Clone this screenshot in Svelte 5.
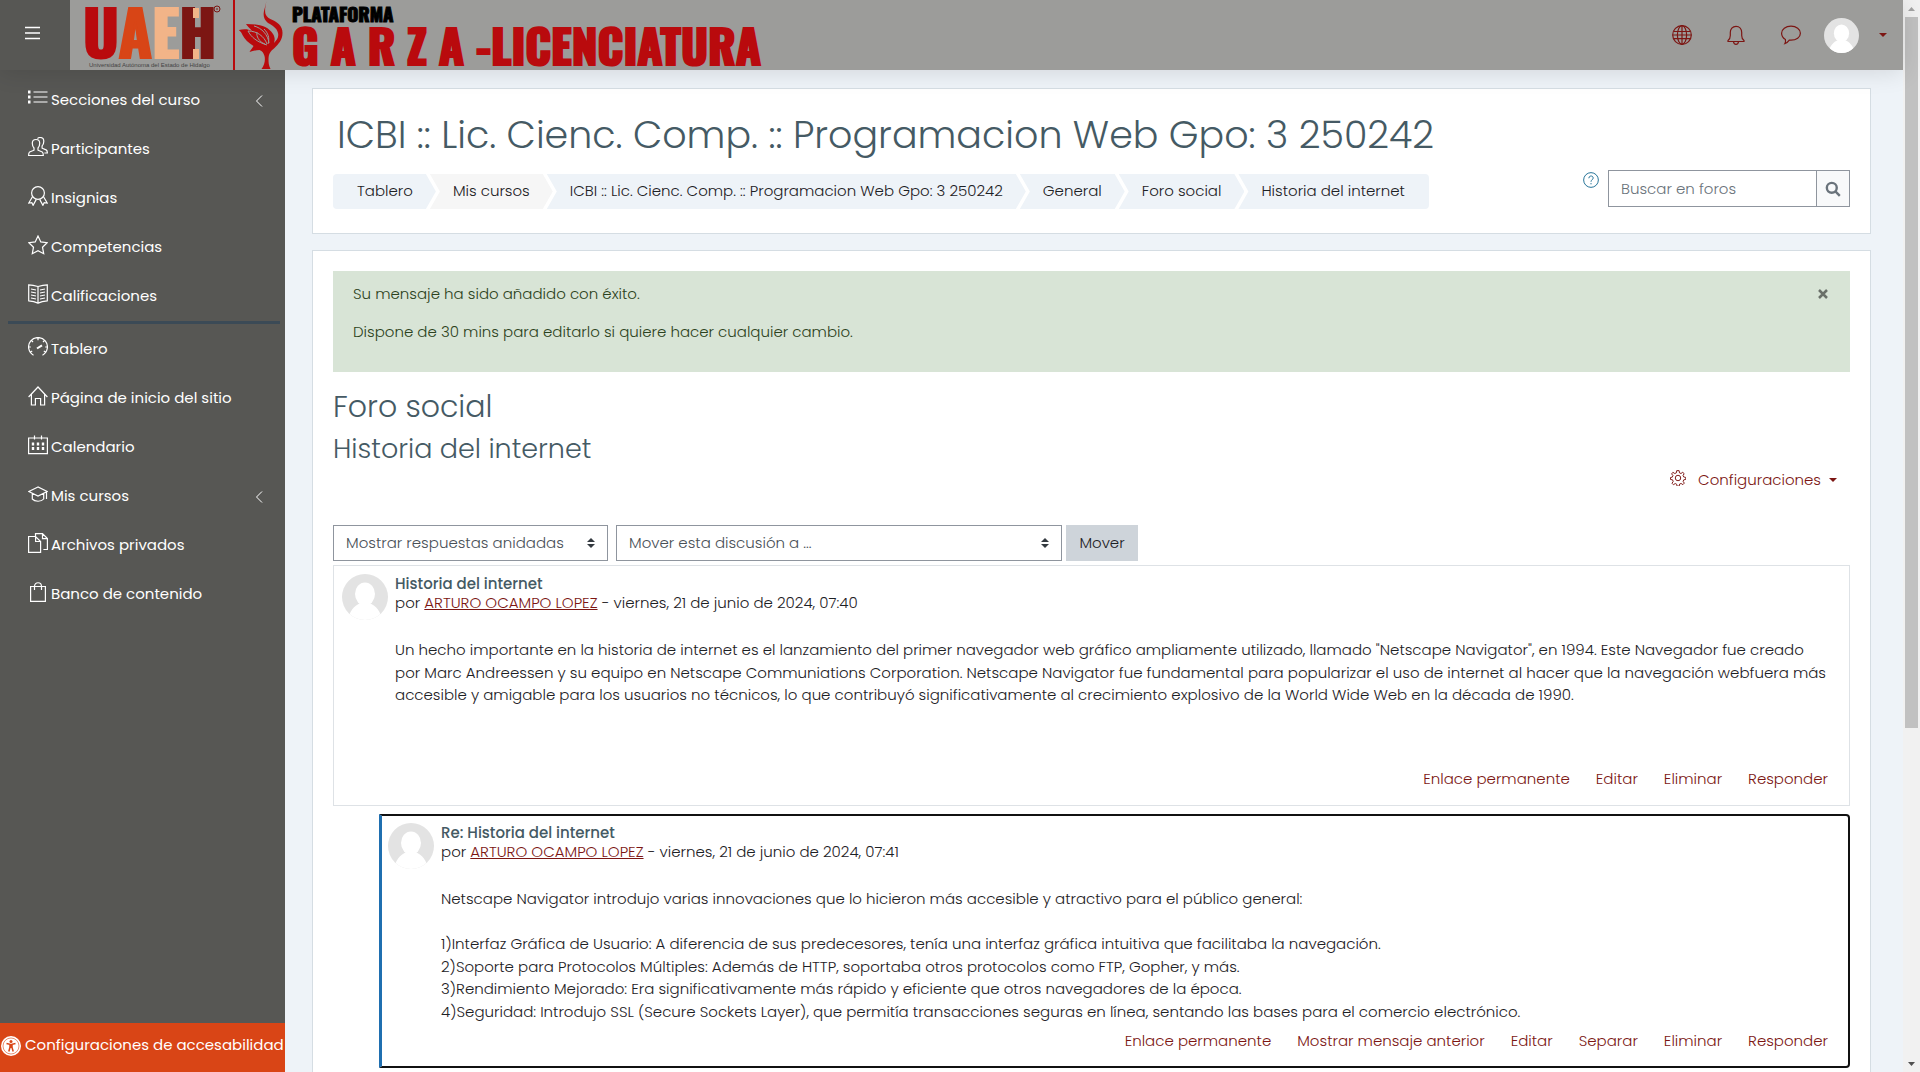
<script>
  const courseNav = [
    { icon: 'list', label: 'Secciones del curso', more: true },
    { icon: 'users', label: 'Participantes' },
    { icon: 'badge', label: 'Insignias' },
    { icon: 'star', label: 'Competencias' },
    { icon: 'book', label: 'Calificaciones' }
  ];
  const siteNav = [
    { icon: 'gauge', label: 'Tablero' },
    { icon: 'home', label: 'Página de inicio del sitio' },
    { icon: 'calendar', label: 'Calendario' },
    { icon: 'cap', label: 'Mis cursos', more: true },
    { icon: 'files', label: 'Archivos privados' },
    { icon: 'bag', label: 'Banco de contenido' }
  ];
  const crumbs = [
    'Tablero',
    'Mis cursos',
    'ICBI :: Lic. Cienc. Comp. :: Programacion Web Gpo: 3 250242',
    'General',
    'Foro social',
    'Historia del internet'
  ];
  const posts = [
    {
      title: 'Historia del internet',
      date: 'viernes, 21 de junio de 2024, 07:40',
      lines: [
        'Un hecho importante en la historia de internet es el lanzamiento del primer navegador web gráfico ampliamente utilizado, llamado "Netscape Navigator", en 1994. Este Navegador fue creado',
        'por Marc Andreessen y su equipo en Netscape Communiations Corporation. Netscape Navigator fue fundamental para popularizar el uso de internet al hacer que la navegación webfuera más',
        'accesible y amigable para los usuarios no técnicos, lo que contribuyó significativamente al crecimiento explosivo de la World Wide Web en la década de 1990.'
      ],
      actions: ['Enlace permanente', 'Editar', 'Eliminar', 'Responder']
    },
    {
      title: 'Re: Historia del internet',
      date: 'viernes, 21 de junio de 2024, 07:41',
      reply: true,
      lines: [
        'Netscape Navigator introdujo varias innovaciones que lo hicieron más accesible y atractivo para el público general:',
        '',
        '1)Interfaz Gráfica de Usuario: A diferencia de sus predecesores, tenía una interfaz gráfica intuitiva que facilitaba la navegación.',
        '2)Soporte para Protocolos Múltiples: Además de HTTP, soportaba otros protocolos como FTP, Gopher, y más.',
        '3)Rendimiento Mejorado: Era significativamente más rápido y eficiente que otros navegadores de la época.',
        '4)Seguridad: Introdujo SSL (Secure Sockets Layer), que permitía transacciones seguras en línea, sentando las bases para el comercio electrónico.'
      ],
      actions: ['Enlace permanente', 'Mostrar mensaje anterior', 'Editar', 'Separar', 'Eliminar', 'Responder']
    }
  ];
  let showAlert = $state(true);
</script>

{#snippet icon(name)}
  <svg class="icon" viewBox="0 0 20 20" aria-hidden="true">
    {#if name === 'list'}
      <path d="M5.5 4h14M5.5 9h14M5.5 14h14" /><path class="dots" d="M0 4h2.500M0 9h2.500M0 14h2.500" />
    {:else if name === 'users'}
      <path d="M8 2.500c2.300 0 3.700 1.600 3.700 3.800 0 2-.6 3.700-1.700 4.700v2.200l4.300 1.800c.7.400 1 1.200 1 3.500H.6c0-2.300.3-3.100 1-3.500L6 13.200V11C4.900 10 4.300 8.300 4.300 6.300 4.300 4.100 5.700 2.500 8 2.500z" />
      <path d="M9.500 1.600C10 .9 11 .5 12 .5c2.500 0 3.800 1.600 3.800 3.800 0 2-.5 3.400-1.700 4.600v2.300l4 1.700c1 .5 1.300 1.300 1.300 3.100h-3" />
    {:else if name === 'badge'}
      <circle cx="10" cy="7" r="6.400" /><path d="M4.600 10.500.8 17l3-.4 1.300 2.700 3.200-5.900M15.400 10.500l3.800 6.500-3-.4-1.300 2.700-3.200-5.900" />
    {:else if name === 'star'}
      <path d="m10 1 2.800 5.900 6.400.8-4.700 4.500 1.200 6.500L10 15.600l-5.700 3.100 1.200-6.500L.8 7.700l6.400-.8z" />
    {:else if name === 'book'}
      <path d="M10 2.500C7.500 1.800 4 1 .7.800v16c3.300.3 6.300.9 9.300 2.300 3-1.400 6-2 9.300-2.300V.8C16 1 12.500 1.800 10 2.500zM10 2.500V19M3 5l5 1M3 8l5 1M3 11l5 1M3 14l5 1M17 5l-5 1M17 8l-5 1M17 11l-5 1M17 14l-5 1" />
    {:else if name === 'gauge'}
      <path d="M5.500 18.200A9.400 9.400 0 1 1 14.500 18.200M10 .8v2.500M3.500 3.500 5 5M16.500 3.500 15 5M.8 10h2M17.200 10h2M2.500 15l1.700-1M17.500 15l-1.700-1" /><path class="thick" d="m9 11.500 5-3.200" />
    {:else if name === 'home'}
      <path d="M.6 11 10 1l9.400 10M3.400 8.500V19h4v-6.500h5.200V19h4V8.500" />
    {:else if name === 'calendar'}
      <path d="M.6 3h18.800v15.600H.6zM6.500.4v4M13.500.4v4" /><path class="dots" d="M3.800 9h2.400M8.800 9h2.400M13.800 9h2.400M3.800 13.500h2.400M8.800 13.500h2.400M13.800 13.500h2.400" />
    {:else if name === 'cap'}
      <path d="M10 3 .8 7.500 10 12l9.200-4.500zM4.300 9.500V15c2.500 3 9 3 11.400 0V9.500M18.500 8v7" />
    {:else if name === 'files'}
      <path d="M.6 3.500h7l5 5v10.900H.6zM7.600 3.500v5h5M7.500 3V.6h7L19.400 5.500v11h-4M14.500.6v5h4.900" />
    {:else if name === 'bag'}
      <path d="M2.600 4.500h14.800v14.800H2.600zM6.500 8V4.500c0-5 7-5 7 0V8" />
    {:else if name === 'globe'}
      <circle cx="10" cy="10" r="9.300" /><ellipse cx="10" cy="10" rx="4.600" ry="9.300" /><path d="M10 .7v18.600M.7 10h18.600M2 6.500h16M2 13.700h16" />
    {:else if name === 'bell'}
      <path d="M2 16.500v-1c1.500-1 2.300-2 2.300-5V7.500C4.300 4 6.500 1.300 10 1.300S15.700 4 15.700 7.500v3c0 3 .8 4 2.300 5v1zM7.500 16.500c.3 3.800 4.700 3.800 5 0" />
    {:else if name === 'chat'}
      <path d="M10 1.200c5.300 0 9.400 3 9.400 7s-4.100 7-9.400 7H8.300C7 17 5.500 18.300 3.800 18.700c.7-1.200.9-2.800.6-4.300C2 13 .6 10.800.6 8.200c0-4 4.100-7 9.400-7z" />
    {:else if name === 'gear'}
      <circle cx="10" cy="10" r="3.400" /><path d="m8.400.8-.4 2.700-2 .9-2.400-1.500-1.600 2 1.700 2-.8 2-2.300.5v2.400l2.600.5.8 2-1.500 2.300 1.800 1.800 2.200-1.500 1.800.8.5 2.500h2.700l.5-2.600 1.900-.8 2.200 1.500 1.800-1.900-1.500-2.200.8-1.900 2.500-.5V9.300l-2.600-.6-.8-1.900L17.700 4.600l-1.800-1.700-2.200 1.500-1.800-.8-.5-2.800z" />
    {:else if name === 'help'}
      <circle cx="10" cy="10" r="9.200" /><path d="M7.300 7.800c0-3.700 5.600-3.700 5.400-.2 0 2-2.700 2.200-2.700 4.600M10 13.800v1.600" />
    {:else if name === 'search'}
      <circle class="heavy" cx="8.500" cy="8.500" r="6.200" /><path class="heavy" d="m13 13 5.500 5.500" />
    {/if}
  </svg>
{/snippet}

{#snippet avatar()}
  <svg class="avatar" viewBox="0 0 46 46" aria-hidden="true">
    <defs><clipPath id="disc"><circle cx="23" cy="23" r="23" /></clipPath></defs>
    <g clip-path="url(#disc)">
      <rect width="46" height="46" fill="#e3e3e3" />
      <ellipse cx="23" cy="20" rx="10" ry="11.500" fill="#fff" />
      <path d="M6 46c1-8 6-15 13-17h8c7 2 12 9 13 17z" fill="#fff" />
    </g>
  </svg>
{/snippet}

{#snippet navList(items)}
  <ul class="nav">
    {#each items as item}
      <li>
        <a href="#{item.icon}">
          {@render icon(item.icon)}<span>{item.label}</span>
          {#if item.more}
            <svg class="more" viewBox="0 0 8 12" aria-hidden="true"><path d="M7 .5 1.500 6 7 11.500" /></svg>
          {/if}
        </a>
      </li>
    {/each}
  </ul>
{/snippet}

<div class="page">
  <header>
    <button class="menu" aria-label="Panel lateral">
      <svg viewBox="0 0 16 14" aria-hidden="true"><path d="M0 1.500h15M0 7h15M0 12.500h15" /></svg>
    </button>
    <a class="brand" href="#inicio" aria-label="Plataforma Garza - Licenciatura">
      <svg class="uaeh" viewBox="0 0 165 70" aria-hidden="true">
        <text class="letters" x="13" y="58"><tspan fill="#b90a0d" stroke="#b90a0d">U</tspan><tspan fill="#d84516" stroke="#d84516">A</tspan><tspan fill="#f2b488" stroke="#f2b488">E</tspan><tspan fill="#7c1613" stroke="#7c1613">H</tspan></text>
        <path d="M123 8h6v10h-6zM123 49h6v10h-6z" fill="#f2b488" />
        <circle cx="147" cy="9" r="3" fill="none" stroke="#7c1613" /><path d="M147 8v2" stroke="#7c1613" />
        <text class="motto" x="19" y="67">Universidad Autónoma del Estado de Hidalgo</text>
        <path d="M164 0v70" stroke="#b90a0d" stroke-width="2" />
      </svg>
      <svg class="heron" viewBox="0 0 48 70" aria-hidden="true">
        <path d="M27.500 1c-1 5-2 9-1 13 1 3 4 5 7 6 4 2 10 5 10 13 0 7-4 11-8 15-4 3-6 6-6 11 0 3 0 6 2 10h-9c3-4 4-9 3-13-1-3-2-5-5-6-3 0-7 1-10 2 1-2 3-4 4-6-5-3-9-7-11-11-1-2-2-4-4-5H0c5-1 9-1 13 1-2-3-5-5-6-7 12 0 22 2 27 10 2 3 2 6 1 9 3-3 5-6 4-10-1-5-6-8-10-10-4-3-5-7-4-12z" />
        <path class="cut" d="M9 31c9 0 16 5 19 13M15 26c8 2 14 9 15 17M9 31c3 6 9 11 19 14" />
        <path class="cut" d="M18 32c-1 4 2 10 8 12M25 29c4 4 6 9 4 15" />
      </svg>
      <span class="wordmark">
        <span class="small">PLATAFORMA</span>
        <span class="large"><span>G A R Z A</span><span>-LICENCIATURA</span></span>
      </span>
    </a>
    <div class="tools">
      <button aria-label="Idioma">{@render icon('globe')}</button>
      <button aria-label="Notificaciones">{@render icon('bell')}</button>
      <button class="chat" aria-label="Mensajes">{@render icon('chat')}</button>
      <button class="user" aria-label="Menú de usuario">{@render avatar()}<i class="caret"></i></button>
    </div>
  </header>

  <aside>
    <nav aria-label="Navegación">
      {@render navList(courseNav)}
      <hr />
      {@render navList(siteNav)}
    </nav>
    <a class="access" href="#accesibilidad">
      <svg viewBox="0 0 20 20" aria-hidden="true">
        <circle cx="10" cy="10" r="10" fill="#fff" /><circle cx="10" cy="10" r="8" fill="none" stroke="#d94516" stroke-width=".6" />
        <circle cx="10" cy="5.500" r="1.500" fill="#d94516" />
        <path d="M5.500 7.500 9 8.300v3L7.800 15.500M14.500 7.500 11 8.300v3l1.200 4.200M10 8v4" fill="none" stroke="#d94516" stroke-width="1.500" />
      </svg>
      <span>Configuraciones de accesabilidad</span>
    </a>
  </aside>

  <main>
    <section class="card head">
      <h1>ICBI :: Lic. Cienc. Comp. :: Programacion Web Gpo: 3 250242</h1>
      <div class="bar">
        <nav aria-label="Ruta">
          <ol>
            {#each crumbs as crumb}<li><a href="#ruta">{crumb}</a></li>{/each}
          </ol>
        </nav>
        <form class="search" onsubmit={(e) => e.preventDefault()}>
          <button type="button" class="help" aria-label="Ayuda">{@render icon('help')}</button>
          <input type="text" placeholder="Buscar en foros" aria-label="Buscar en foros" />
          <button class="go" aria-label="Buscar">{@render icon('search')}</button>
        </form>
      </div>
    </section>

    <section class="card body">
      {#if showAlert}
        <div class="alert" role="status">
          <div>
            <p>Su mensaje ha sido añadido con éxito.</p>
            <p>Dispone de 30 mins para editarlo si quiere hacer cualquier cambio.</p>
          </div>
          <button aria-label="Cerrar" onclick={() => (showAlert = false)}>
            <svg viewBox="0 0 10 10" aria-hidden="true"><path d="m1 1 8 8M9 1 1 9" /></svg>
          </button>
        </div>
      {/if}
      <h2>Foro social</h2>
      <h3>Historia del internet</h3>
      <div class="settings">
        <button>{@render icon('gear')}<span>Configuraciones</span><i class="caret"></i></button>
      </div>
      <form class="controls" onsubmit={(e) => e.preventDefault()}>
        <span class="select mode">
          <select aria-label="Modo de visualización"><option>Mostrar respuestas anidadas</option></select>
          <svg viewBox="0 0 8 10" aria-hidden="true"><path d="M4 0 8 4H0zM4 10 0 6h8z" /></svg>
        </span>
        <span class="select target">
          <select aria-label="Mover esta discusión a"><option>Mover esta discusión a ...</option></select>
          <svg viewBox="0 0 8 10" aria-hidden="true"><path d="M4 0 8 4H0zM4 10 0 6h8z" /></svg>
        </span>
        <button>Mover</button>
      </form>

      {#each posts as post}
        <article class:reply={post.reply}>
          {@render avatar()}
          <div class="content">
            <h4>{post.title}</h4>
            <div class="by">por <a href="#autor">ARTURO OCAMPO LOPEZ</a> - {post.date}</div>
            <div class="text">
              {#each post.lines as line}{line}<br />{/each}
            </div>
            <div class="actions">
              {#each post.actions as action}<a href="#accion">{action}</a>{/each}
            </div>
          </div>
        </article>
      {/each}
    </section>
  </main>

  <div class="scroll" aria-hidden="true">
    <svg viewBox="0 0 17 17"><path d="m8.500 7 3.500 4H5z" fill="#a3a3a3" /></svg>
    <div class="track"><div class="thumb"></div></div>
    <svg viewBox="0 0 17 17"><path d="m8.500 11 3.500-4H5z" fill="#505050" /></svg>
  </div>
</div>

<style>
  :global(body) {
    margin: 0;
    background: #eef3f8;
  }
  .page {
    display: grid;
    grid-template: 70px minmax(0, 1fr) / 285px minmax(0, 1fr) 17px;
    height: 100vh;
    overflow: hidden;
    font: 300 15px/1.5 Poppins, Inter, sans-serif;
    color: #1d2125;
  }
  .page :global(*) {
    box-sizing: border-box;
  }
  button,
  input,
  select {
    font: inherit;
    color: inherit;
    border: 0;
    margin: 0;
    padding: 0;
    background: none;
    border-radius: 0;
  }
  a {
    color: inherit;
    text-decoration: none;
  }
  svg {
    display: block;
    flex: none;
  }
  .icon {
    width: 20px;
    height: 20px;
    fill: none;
    stroke: currentColor;
    stroke-width: 1.2;
  }
  .dots {
    stroke-width: 3;
  }
  .thick {
    stroke-width: 2;
  }
  .heavy {
    stroke-width: 3;
  }
  .caret {
    border: 4px solid transparent;
    border-top-color: currentColor;
    border-bottom: 0;
  }

  header {
    grid-column: 1 / 3;
    display: flex;
    background: #9c9c9a;
    box-shadow: 0 2px 24px rgba(0, 0, 0, 0.12);
    z-index: 1;
  }
  .menu {
    width: 70px;
    padding: 0 0 4px 25px;
    background: #575754;
    flex: none;
  }
  .menu svg {
    width: 16px;
    height: 14px;
    stroke: #fff;
    stroke-width: 1.5;
  }
  .brand {
    display: flex;
  }
  .uaeh {
    width: 165px;
    height: 70px;
  }
  .letters {
    font: 700 61px Oswald, 'Liberation Sans', sans-serif;
    stroke-width: 2;
  }
  .motto {
    font: 400 6px 'Liberation Sans', sans-serif;
    fill: #444;
  }
  .heron {
    width: 48px;
    height: 70px;
    margin-left: 4px;
    fill: #b90a0d;
  }
  .cut {
    fill: none;
    stroke: #9c9c9a;
  }
  .wordmark {
    display: flex;
    flex-direction: column;
    padding: 2px 0 0 5px;
    font-family: Oswald, 'Liberation Sans', sans-serif;
    font-weight: 700;
    white-space: nowrap;
  }
  .small {
    font-size: 19px;
    line-height: 22px;
    color: #000;
    -webkit-text-stroke: 1px #000;
  }
  .large {
    display: flex;
    gap: 12px;
    font-size: 46px;
    line-height: 40px;
    color: #b90a0d;
    -webkit-text-stroke: 2px #b90a0d;
  }
  .tools {
    display: flex;
    align-items: center;
    gap: 34px;
    margin-left: auto;
    padding-right: 16px;
    color: #7c1613;
  }
  .tools .chat .icon,
  .tools .chat :global(.icon) {
    width: 22px;
  }
  .tools .user {
    display: flex;
    align-items: center;
    gap: 20px;
    margin-left: -12px;
  }
  .avatar {
    width: 46px;
    height: 46px;
  }
  .tools .avatar {
    width: 35px;
    height: 35px;
  }

  aside {
    display: flex;
    flex-direction: column;
    justify-content: space-between;
    background: #575754;
    color: #fff;
    font-weight: 400;
  }
  aside nav {
    padding-top: 6px;
  }
  ul,
  ol {
    list-style: none;
    margin: 0;
    padding: 0;
  }
  .nav a {
    display: flex;
    align-items: center;
    gap: 3px;
    height: 49px;
    padding: 0 22px 0 28px;
  }
  .nav .icon {
    margin-bottom: 5px;
  }
  .more {
    width: 8px;
    height: 12px;
    margin-left: auto;
    fill: none;
    stroke: #fff;
  }
  hr {
    height: 3px;
    margin: 0 5px 1px 8px;
    border: 0;
    background: #3b4a56;
  }
  .access {
    display: flex;
    align-items: center;
    gap: 4px;
    height: 49px;
    padding: 0 1px 4px;
    background: #d94516;
    white-space: nowrap;
    overflow: hidden;
  }
  .access svg {
    width: 20px;
    height: 20px;
  }

  main {
    display: flex;
    flex-direction: column;
    gap: 16px;
    padding: 18px 32px 0 27px;
    background: #eef3f8;
    min-height: 0;
  }
  .card {
    padding: 20px;
    border: 1px solid #d5dde3;
    background: #fff;
  }
  .head {
    padding-bottom: 24px;
  }
  .body {
    flex: 1 0 auto;
  }
  h1,
  h2,
  h3,
  h4,
  p {
    margin: 0;
    font-weight: 300;
  }
  h1,
  h2,
  h3,
  h4 {
    color: #455a64;
  }
  h1 {
    padding-left: 4px;
    font-size: 38px;
    line-height: 52px;
  }
  .bar {
    display: flex;
    justify-content: space-between;
    align-items: flex-start;
    padding-top: 9px;
  }
  ol {
    display: flex;
    margin-top: 4px;
    border-radius: 4px;
    overflow: hidden;
    white-space: nowrap;
  }
  ol li {
    height: 35px;
    padding: 0 23px;
    line-height: 33px;
    background: #eef3f8;
    clip-path: polygon(0 0, calc(100% - 10px) 0, 100% 50%, calc(100% - 10px) 100%, 0 100%, 10px 50%);
  }
  ol li + li {
    margin-left: -6px;
  }
  ol li:nth-child(2) {
    background: #f6f6f6;
  }
  ol li:first-child {
    padding-left: 24px;
    clip-path: polygon(0 0, calc(100% - 10px) 0, 100% 50%, calc(100% - 10px) 100%, 0 100%);
  }
  ol li:last-child {
    padding-right: 24px;
    clip-path: polygon(0 0, 100% 0, 100% 100%, 0 100%, 10px 50%);
  }
  .search {
    display: flex;
  }
  .help {
    align-self: flex-start;
    margin: 2px 9px 0 0;
    color: #1f6f94;
  }
  .help .icon,
  .go .icon,
  .settings .icon {
    width: 16px;
    height: 16px;
  }
  .search input {
    width: 208px;
    height: 37px;
    padding: 0 12px;
    border: 1px solid #8f959e;
    border-right: 0;
  }
  .search input::placeholder {
    color: #6a737b;
    opacity: 1;
  }
  .go {
    width: 34px;
    display: grid;
    place-items: center;
    border: 1px solid #8f959e;
    background: #f8f9fa;
    color: #6a737b;
  }

  .alert {
    display: flex;
    justify-content: space-between;
    align-items: flex-start;
    min-height: 101px;
    padding: 12px 20px;
    background: #d8e4d6;
    color: #2c4220;
  }
  .alert p {
    margin-bottom: 15px;
  }
  .alert button {
    padding: 6px 2px;
  }
  .alert svg {
    width: 10px;
    height: 10px;
    stroke: #6a7069;
    stroke-width: 2.5;
  }
  h2 {
    margin-top: 16px;
    font-size: 30px;
    line-height: 38px;
  }
  h3 {
    margin-top: 4px;
    font-size: 27px;
    line-height: 38px;
  }
  .settings {
    display: flex;
    justify-content: flex-end;
    padding-right: 13px;
  }
  .settings button {
    display: flex;
    align-items: center;
    height: 24px;
    color: #7c1613;
  }
  .settings .icon {
    margin-bottom: 4px;
  }
  .settings span {
    margin: 0 8px 0 12px;
  }
  .controls {
    display: flex;
    height: 36px;
    margin-top: 33px;
    color: #495057;
  }
  .select {
    display: flex;
    align-items: center;
    border: 1px solid #8f959e;
    padding-right: 12px;
    margin-right: 8px;
  }
  .select select {
    flex: 1;
    min-width: 0;
    height: 34px;
    padding-left: 12px;
    appearance: none;
  }
  .select svg {
    width: 8px;
    height: 10px;
    fill: #343a40;
  }
  .mode {
    width: 275px;
  }
  .target {
    width: 446px;
    margin-right: 4px;
  }
  .controls button {
    width: 72px;
    background: #ced4da;
    color: #1d2125;
  }

  article {
    display: flex;
    gap: 7px;
    margin-top: 4px;
    padding: 8px;
    border: 1px solid #dee2e6;
  }
  .content {
    flex: 1;
    min-width: 0;
    padding-right: 4px;
  }
  h4 {
    font-size: 15px;
    font-weight: 500;
    line-height: 19px;
  }
  .by {
    line-height: 20px;
  }
  .by a {
    color: #7c1613;
    text-decoration: underline;
  }
  .text {
    padding-top: 26px;
  }
  .actions {
    display: flex;
    justify-content: flex-end;
    gap: 26px;
    margin-top: 61px;
    padding: 0 9px 7px 0;
    color: #7c1613;
  }
  .reply {
    margin: 8px 0 0 46px;
    border: 2px solid #111;
    border-left: 3px solid #1f6fb0;
    border-radius: 0 4px 4px 0;
    padding: 7px 8px 6px 6px;
  }
  .reply .content {
    padding-right: 3px;
  }
  .reply .actions {
    margin-top: 7px;
  }

  .scroll {
    grid-column: 3;
    grid-row: 1 / 3;
    display: flex;
    flex-direction: column;
    background: #f1f1f1;
  }
  .scroll svg {
    width: 17px;
    height: 17px;
  }
  .track {
    flex: 1;
    padding: 0 2px;
  }
  .thumb {
    height: 68.5%;
    background: #c1c1c1;
  }
</style>
